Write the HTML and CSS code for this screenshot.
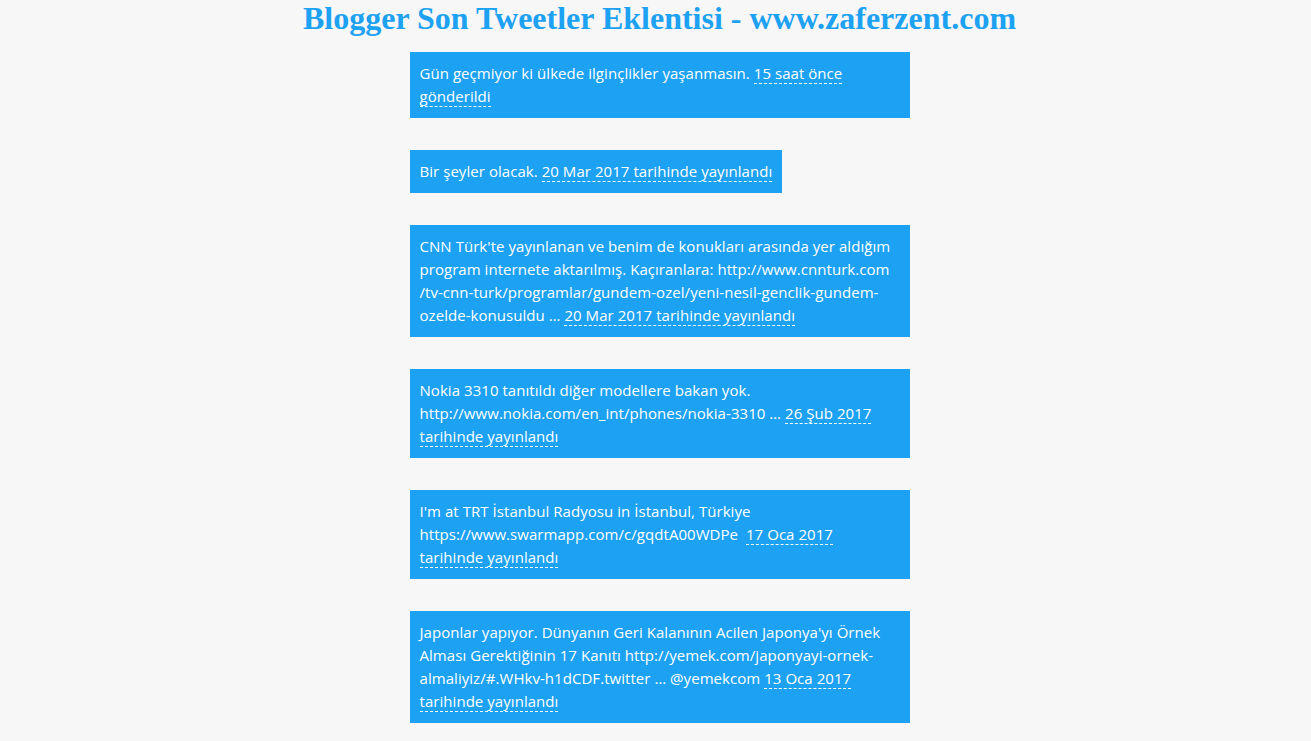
FILE: index.html
```html
<!DOCTYPE html>
<html lang="tr">
<head>
<meta charset="utf-8">
<title>Blogger Son Tweetler Eklentisi</title>
<link rel="stylesheet" href="styles.css">
</head>
<body>
<h1 class="title">Blogger Son Tweetler Eklentisi - www.zaferzent.com</h1>
<ul class="tweets">
  <li class="tweet">Gün geçmiyor ki ülkede ilginçlikler yaşanmasın. <a class="time" href="#">15 saat önce gönderildi</a></li>
  <li class="tweet">Bir şeyler olacak. <a class="time" href="#">20 Mar 2017 tarihinde yayınlandı</a></li>
  <li class="tweet">CNN Türk'te yayınlanan ve benim de konukları arasında yer aldığım program internete aktarılmış. Kaçıranlara: http://www.cnnturk.com /tv-cnn-turk/programlar/gundem-ozel/yeni-nesil-genclik-gundem-ozelde-konusuldu … <a class="time" href="#">20 Mar 2017 tarihinde yayınlandı</a></li>
  <li class="tweet">Nokia 3310 tanıtıldı diğer modellere bakan yok. http://www.nokia.com/en_int/phones/nokia-3310 … <a class="time" href="#">26 Şub 2017 tarihinde yayınlandı</a></li>
  <li class="tweet">I'm at TRT İstanbul Radyosu in İstanbul, Türkiye https://www.swarmapp.com/c/gqdtA00WDPe &nbsp;<a class="time" href="#">17 Oca 2017 tarihinde yayınlandı</a></li>
  <li class="tweet">Japonlar yapıyor. Dünyanın Geri Kalanının Acilen Japonya'yı Örnek Alması Gerektiğinin 17 Kanıtı http://yemek.com/japonyayi-ornek-almaliyiz/#.WHkv-h1dCDF.twitter … @yemekcom <a class="time" href="#">13 Oca 2017 tarihinde yayınlandı</a></li>
</ul>
</body>
</html>
```

FILE: styles.css
```css
html, body {
  background: #f7f7f7;
}
body {
  margin: 0 0 0 8px;
}
.title {
  margin: 1px 0 17px;
  text-align: center;
  font-family: "Liberation Serif", "Times New Roman", serif;
  font-weight: bold;
  font-size: 32px;
  line-height: 34px;
  color: #1da1f2;
}
.tweets {
  list-style: none;
  margin: 0 auto;
  padding: 0;
  width: 500px;
  display: flex;
  flex-direction: column;
  align-items: flex-start;
  gap: 32px;
}
.tweet {
  box-sizing: border-box;
  max-width: 500px;
  background: #1da1f2;
  color: #fff;
  padding: 10px;
  font-family: "Open Sans", "Noto Sans", sans-serif;
  font-size: 15px;
  letter-spacing: 0.05px;
  line-height: 23px;
}
.time {
  color: #fff;
  text-decoration: none;
  border-bottom: 1px dashed #fff;
}
```
